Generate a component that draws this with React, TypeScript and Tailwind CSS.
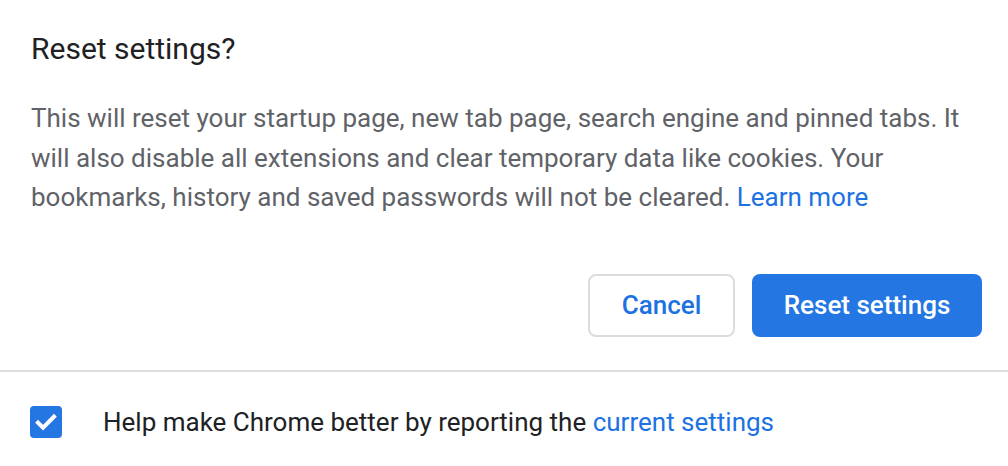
import React from 'react';

export default function App() {
  return (
    <div className="w-[1008px] h-[466px] bg-white font-['Roboto',sans-serif] overflow-hidden">
      <div className="px-[31px] pt-[29px]">
        <h1 className="text-[30px] leading-[40px] text-[#202124] font-normal">Reset settings?</h1>
        <p className="mt-[30px] text-[26px] leading-[39.5px] text-[#5f6368] w-[950px]">
          This will reset your startup page, new tab page, search engine and pinned tabs. It will also
          disable all extensions and clear temporary data like cookies. Your bookmarks, history and saved
          passwords will not be cleared. <a className="text-[#1c72e2]">Learn more</a>
        </p>
      </div>
      <div className="flex justify-end gap-[17px] pr-[26px] mt-[56px]">
        <button className="h-[63px] w-[147px] rounded-[8px] border-2 border-[#dadce0] bg-white text-[#1c72e2] text-[26px] font-medium">
          Cancel
        </button>
        <button className="h-[63px] w-[230px] rounded-[8px] bg-[#2477e3] text-white text-[26px] font-medium">
          Reset settings
        </button>
      </div>
      <div className="mt-[33px] h-[2px] bg-[#dedede]" />
      <div className="flex items-center pl-[30px] mt-[31px]">
        <div className="w-[32px] h-[32px] rounded-[4px] bg-[#2477e3] flex items-center justify-center">
          <svg viewBox="0 0 24 24" className="w-[32px] h-[32px]" fill="none" stroke="white" strokeWidth="3" strokeLinecap="square">
            <path d="M6 12.5l3.8 3.8L18 8" />
          </svg>
        </div>
        <span className="ml-[41px] text-[26px] text-[#202124]">
          Help make Chrome better by reporting the <a className="text-[#1c72e2]">current settings</a>
        </span>
      </div>
    </div>
  );
}
